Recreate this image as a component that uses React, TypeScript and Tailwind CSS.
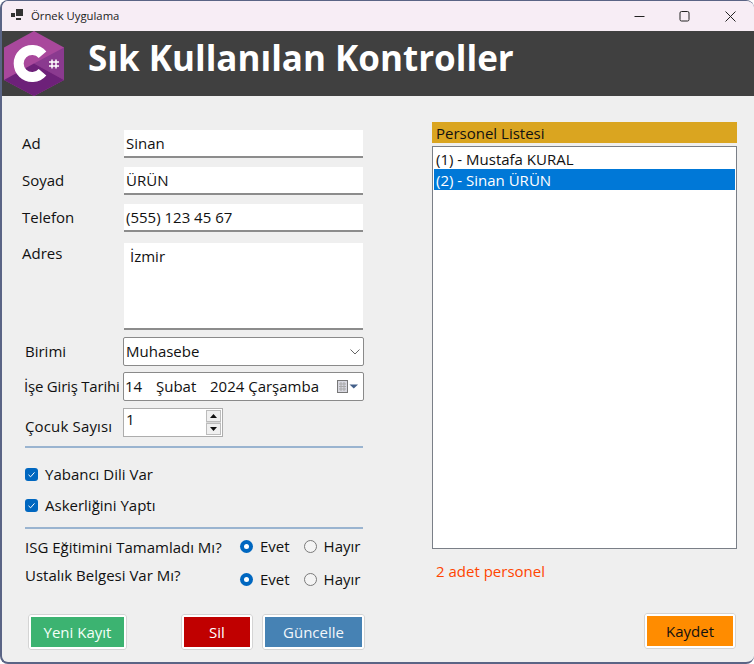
const font = "font-['Open_Sans','Noto_Sans',sans-serif]";

function CSharpLogo() {
  return (
    <svg width="62" height="65" viewBox="0 0 62 65" className="ml-[1px] block">
      <polygon points="31,0 61,16.5 61,49 31,65 1,49 1,16.5" fill="#a9489c" />
      <polygon points="31,32.5 61,16.5 61,49" fill="#8a3a8f" />
      <polygon points="31,32.5 61,49 31,65 1,49" fill="#6d2179" />
      <path d="M39.5 23.8 A13.5 13.5 0 1 0 39.5 41.2" fill="none" stroke="#fff" strokeWidth="10" />
      <path d="M49 28.5 L49 37.5 M53 28.5 L53 37.5 M46 31 L56 31 M46 35 L56 35" stroke="#fff" strokeWidth="1.5" fill="none" />
    </svg>
  );
}

function TextRow({ label, value, top }: { label: string; value: string; top: string }) {
  return (
    <div className={`flex ${top}`}>
      <div className="w-[102px] pt-[2px] text-[15px] leading-[22px] text-[#111]">{label}</div>
      <div className="h-[28px] w-[239px] border-b-2 border-[#8c8c8c] bg-white pl-[2px] pt-[2px] text-[15px] leading-[22px] text-[#111]">
        {value}
      </div>
    </div>
  );
}

function CheckRow({ label, top }: { label: string; top: string }) {
  return (
    <div className={`flex h-[20px] items-center gap-[7px] pl-[3px] text-[15px] ${top}`}>
      <span className="flex h-[13px] w-[13px] items-center justify-center rounded-[3px] bg-[#0067c0]">
        <svg width="9" height="9" viewBox="0 0 9 9">
          <path d="M1.5 4.8 L3.6 6.8 L7.5 2.4" fill="none" stroke="#fff" strokeWidth="1" />
        </svg>
      </span>
      <span className="text-[#111]">{label}</span>
    </div>
  );
}

function Radio({ on, label }: { on?: boolean; label: string }) {
  return (
    <span className="flex items-center gap-[7px]">
      {on ? (
        <span className="flex h-[13px] w-[13px] items-center justify-center rounded-full bg-[#0067c0]">
          <span className="h-[5px] w-[5px] rounded-full bg-white" />
        </span>
      ) : (
        <span className="h-[13px] w-[13px] rounded-full border border-[#7a7a7a] bg-[#f4f4f4]" />
      )}
      <span className="text-[#111]">{label}</span>
    </span>
  );
}

function ActionButton({ label, className }: { label: string; className: string }) {
  return (
    <button className={`flex h-[36px] items-center justify-center rounded-[3px] border-[3px] border-white text-[15px] outline outline-1 outline-[#d4d4d4] outline-offset-[-1px] ${className}`}>
      {label}
    </button>
  );
}

export default function App() {
  return (
    <div className={`${font} h-[664px] w-[754px] overflow-hidden rounded-[8px] border-t border-b-2 border-l-2 border-[#5a6485] bg-[#efefef]`}>
      {/* title bar */}
      <div className="flex h-[30px] items-center bg-[#f7edf5]">
        <svg width="13" height="12" viewBox="0 0 13 12" className="ml-[9px] -mt-[2px]">
          <rect x="5" y="0" width="7" height="7" fill="#333" />
          <rect x="0" y="4" width="4" height="4" fill="#333" />
          <rect x="5" y="9" width="5" height="2" fill="#333" />
        </svg>
        <span className="ml-[7px] text-[11.3px] text-[#222]">Örnek Uygulama</span>
        <div className="ml-auto flex items-center pr-[18px]">
          <svg width="11" height="11" viewBox="0 0 11 11" className="mr-[34px]">
            <path d="M0.5 5.5 H10.5" stroke="#222" strokeWidth="1" />
          </svg>
          <svg width="11" height="11" viewBox="0 0 11 11" className="mr-[35px]">
            <rect x="1" y="0.5" width="9" height="9.5" rx="1.5" fill="none" stroke="#222" strokeWidth="1" />
          </svg>
          <svg width="11" height="11" viewBox="0 0 11 11">
            <path d="M0.5 0.5 L10.5 10.5 M10.5 0.5 L0.5 10.5" stroke="#222" strokeWidth="1" />
          </svg>
        </div>
      </div>

      {/* header */}
      <div className="flex h-[65px] items-center bg-[#404040]">
        <CSharpLogo />
        <h1 className="ml-[23px] pb-[12px] text-[35px] leading-[56px] font-bold text-white">Sık Kullanılan Kontroller</h1>
      </div>

      <div className="flex">
        {/* form */}
        <div className="w-[430px] pl-[20px]">
          <TextRow label="Ad" value="Sinan" top="mt-[34px]" />
          <TextRow label="Soyad" value="ÜRÜN" top="mt-[9px]" />
          <TextRow label="Telefon" value="(555) 123 45 67" top="mt-[9px]" />
          <div className="mt-[11px] flex">
            <div className="w-[102px] text-[15px] leading-[20px] text-[#111]">Adres</div>
            <div className="h-[87px] w-[239px] border-b-2 border-[#8c8c8c] bg-white pl-[6px] pt-[2px] text-[15px] leading-[22px] text-[#111]">İzmir</div>
          </div>

          <div className="mt-[7px] flex items-center">
            <div className="w-[101px] pl-[3px] text-[15px] text-[#111]">Birimi</div>
            <div className="flex h-[29px] w-[241px] items-center justify-between rounded-[2px] border border-[#8a8a8a] bg-white pl-[2px] pr-[3px] text-[15px] text-[#111]">
              <span>Muhasebe</span>
              <svg width="10" height="6" viewBox="0 0 10 6">
                <path d="M0.5 0.5 L5 5 L9.5 0.5" fill="none" stroke="#666" strokeWidth="1" />
              </svg>
            </div>
          </div>

          <div className="mt-[6px] flex items-center">
            <div className="w-[101px] whitespace-nowrap text-[15px] tracking-[-0.2px] text-[#111]">
              <span className="pl-[2px]">İşe Giriş Tarihi</span>
            </div>
            <div className="flex h-[29px] w-[241px] items-center justify-between rounded-[2px] border border-[#8a8a8a] bg-white pl-[1px] pr-[4px] text-[15px] text-[#111]">
              <span className="flex whitespace-nowrap">
                <span className="w-[31px]">14</span>
                <span className="w-[54px]">Şubat</span>
                <span>2024 Çarşamba</span>
              </span>
              <svg width="22" height="13" viewBox="0 0 22 13">
                <rect x="0.5" y="0.5" width="10" height="12" fill="#d8d8e0" stroke="#777" />
                <path d="M2 4 H9 M2 6.5 H9 M2 9 H9 M4 2 V11 M7 2 V11" stroke="#a9a9a9" strokeWidth="1" />
                <path d="M12.5 4.5 H21 L16.75 8.5 Z" fill="#44608a" />
              </svg>
            </div>
          </div>

          <div className="mt-[7px] flex">
            <div className="w-[101px] pl-[3px] pt-[7px] text-[15px] leading-[22px] tracking-[0.15px] text-[#111]">Çocuk Sayısı</div>
            <div className="flex h-[29px] w-[100px] justify-between border border-[#adadad] bg-white pl-[2px] text-[15px] leading-[20px] text-[#111]">
              <span>1</span>
              <div className="m-[1px] flex w-[15px] flex-col gap-[1px] bg-[#d8d8d8]">
                <div className="flex flex-1 items-center justify-center border border-[#bcbcbc] bg-[#f0f0f0]">
                  <svg width="7" height="4" viewBox="0 0 7 4"><path d="M3.5 0 L7 4 H0 Z" fill="#111" /></svg>
                </div>
                <div className="flex flex-1 items-center justify-center border border-[#bcbcbc] bg-[#f0f0f0]">
                  <svg width="7" height="4" viewBox="0 0 7 4"><path d="M0 0 H7 L3.5 4 Z" fill="#111" /></svg>
                </div>
              </div>
            </div>
          </div>

          <div className="mt-[9px] ml-[3px] h-[2px] w-[338px] bg-[#9ab4d0]" />
          <CheckRow label="Yabancı Dili Var" top="mt-[16px]" />
          <CheckRow label="Askerliğini Yaptı" top="mt-[11px]" />
          <div className="mt-[12px] ml-[3px] h-[2px] w-[338px] bg-[#9ab4d0]" />

          <div className="mt-[6px] flex h-[22px] items-center pl-[3px] text-[15px] text-[#111]">
            <span className="mt-[2px] w-[215px]">ISG Eğitimini Tamamladı Mı?</span>
            <Radio on label="Evet" />
            <span className="ml-[14px]"><Radio label="Hayır" /></span>
          </div>
          <div className="mt-[11px] flex h-[22px] items-center pl-[3px] text-[15px] text-[#111]">
            <span className="-mt-[8px] w-[215px]">Ustalık Belgesi Var Mı?</span>
            <Radio on label="Evet" />
            <span className="ml-[14px]"><Radio label="Hayır" /></span>
          </div>

          <div className="mt-[24px] flex pl-[6px]">
            <ActionButton label="Yeni Kayıt" className="w-[99px] bg-[#3cb371] text-[#f4fff8]" />
            <ActionButton label="Sil" className="ml-[54px] w-[72px] bg-[#c00000] text-white" />
            <ActionButton label="Güncelle" className="ml-[9px] w-[103px] bg-[#4682b4] text-[#f2f6fa]" />
          </div>
        </div>

        {/* list */}
        <div className="w-[305px] pt-[26px]">
          <div className="h-[21px] bg-[#daa520] pl-[4px] text-[15px] leading-[22px] text-[#111]">Personel Listesi</div>
          <div className="mt-[3px] h-[403px] border border-[#7a7f87] bg-white p-[1px] text-[15px]">
            <div className="h-[21px] pl-[2px] leading-[23px] text-[#111]">(1) - Mustafa KURAL</div>
            <div className="h-[21px] bg-[#0078d7] pl-[2px] leading-[23px] text-white">(2) - Sinan ÜRÜN</div>
          </div>
          <div className="mt-[11px] pl-[4px] text-[15px] leading-[22px] text-[#ff4500]">2 adet personel</div>
          <div className="mt-[31px] flex justify-end pr-[1px]">
            <ActionButton label="Kaydet" className="w-[92px] bg-[#ff8c00] pt-[1px] text-[#111]" />
          </div>
        </div>
      </div>
    </div>
  );
}
